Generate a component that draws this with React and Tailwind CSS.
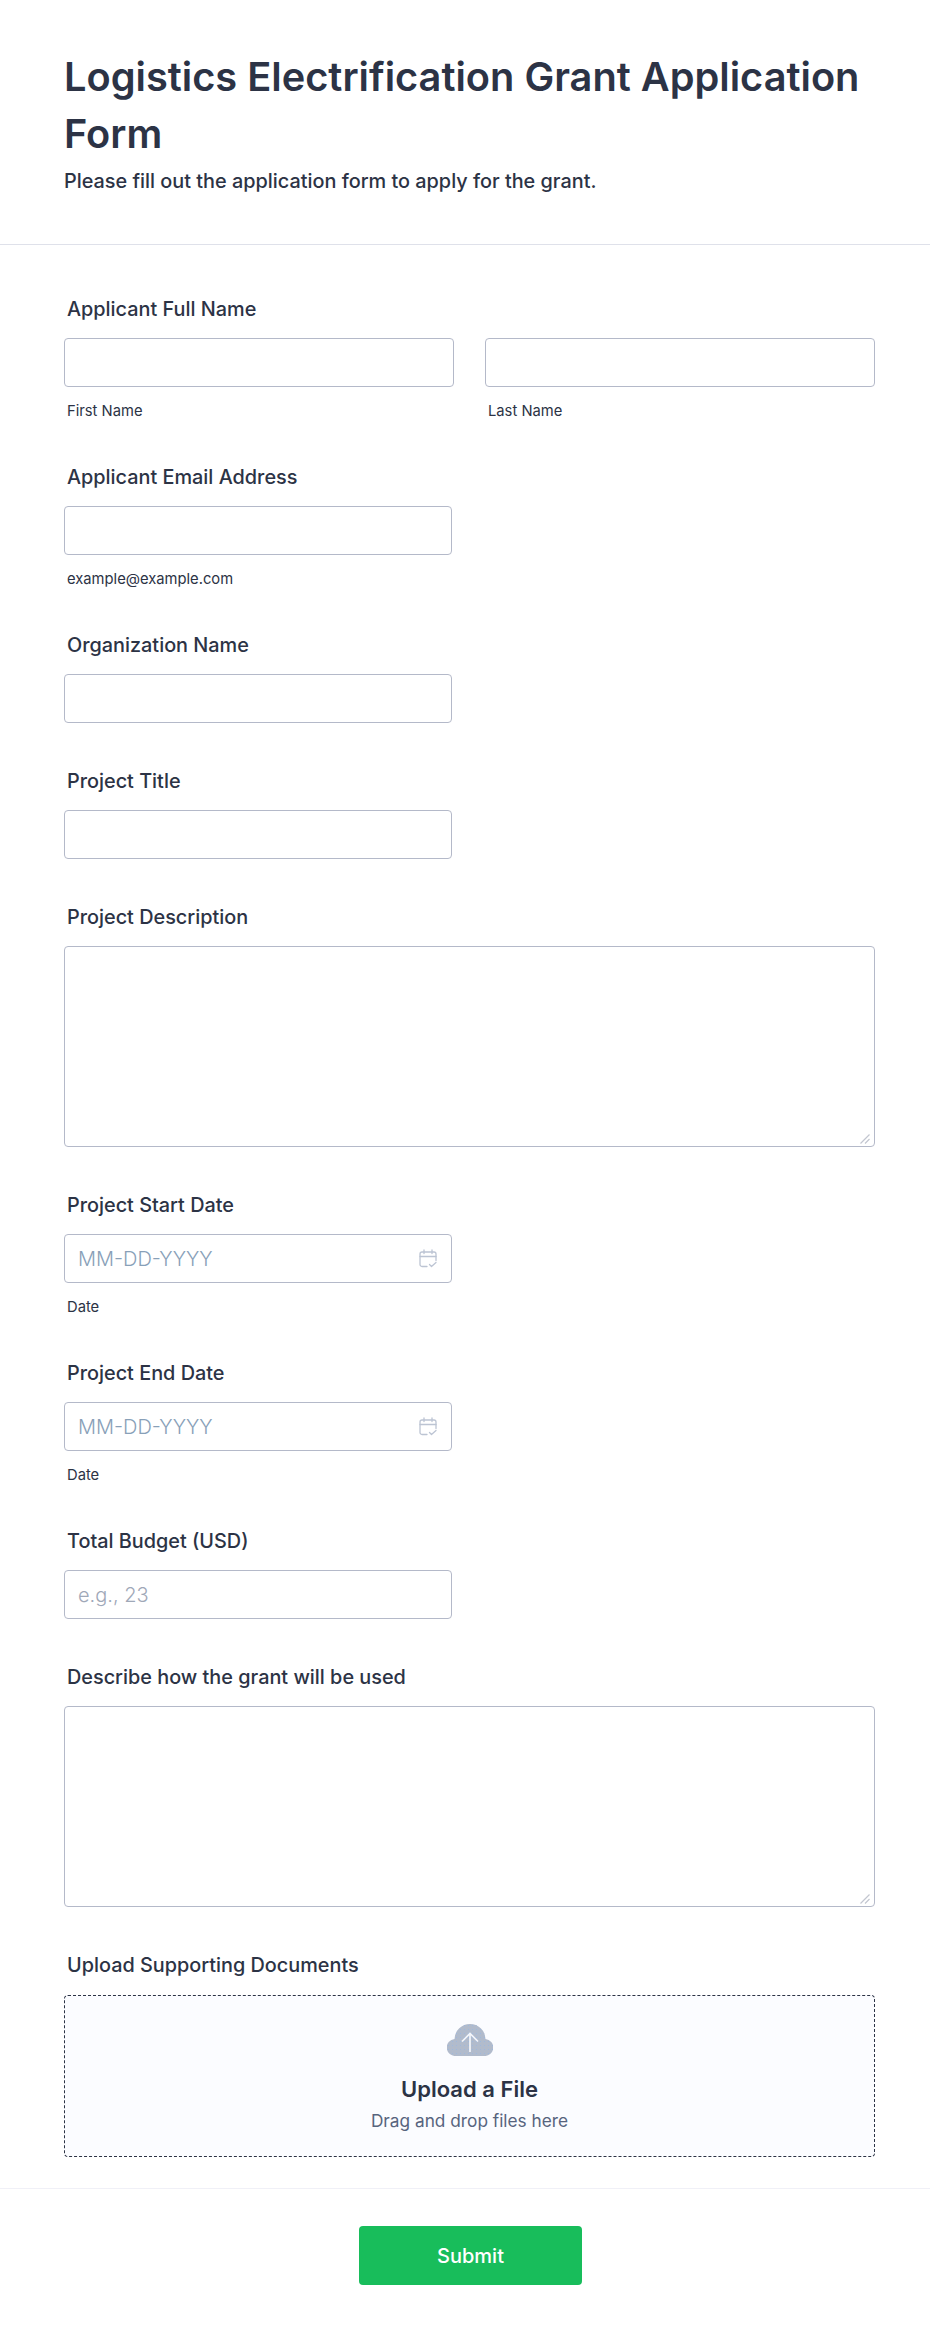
const font = { fontFamily: "Inter, sans-serif" };

function CalendarIcon() {
    return (
        <svg className="absolute right-[15px] top-[15px]" width="18" height="19" viewBox="0 0 18 19" fill="none" stroke="#bcc4d3" strokeWidth="1.3" strokeLinecap="round" strokeLinejoin="round">
            <path d="M8 17.500H3a2 2 0 0 1-2-2V5a2 2 0 0 1 2-2h12a2 2 0 0 1 2 2v6.500" />
            <path d="M1 7.500h16" />
            <path d="M5 1v3.500M13 1v3.500" />
            <path d="M10.500 15.500l2 2 4.500-4" />
        </svg>
    );
}

function CloudIcon() {
    return (
        <svg width="46" height="32" viewBox="0 0 46 32">
            <defs>
                <pattern id="dots" width="4" height="4" patternUnits="userSpaceOnUse">
                    <rect x="1" y="1" width="1" height="1" fill="#9fb8dc" />
                </pattern>
            </defs>
            <path d="M9 32a8.500 8.500 0 0 1-1.500-17A15.500 15.500 0 0 1 23 0a15.500 15.500 0 0 1 15.500 15A8.500 8.500 0 0 1 37 32Z" fill="#b1bbcc" />
            <path d="M9 32a8.500 8.500 0 0 1-1.500-17A15.500 15.500 0 0 1 23 0a15.500 15.500 0 0 1 15.500 15A8.500 8.500 0 0 1 37 32Z" fill="url(#dots)" />
            <path d="M23 28V10M15 17.500L23 9.500l8 8" fill="none" stroke="#f4f6fb" strokeWidth="1.700" />
        </svg>
    );
}

function Label({ children, className = "mb-[17px]" }) {
    return <label className={`block h-6 ml-[3px] text-[19.850px] leading-6 font-[450] text-[#2c3345] ${className}`}>{children}</label>;
}

function Sub({ children }) {
    return <div className="h-4 mt-[16px] ml-[3px] text-[14.750px] leading-4 text-[#2c3345]">{children}</div>;
}

function TextInput({ placeholder, className = "" }) {
    return (
        <input
            type="text"
            placeholder={placeholder}
            className={`w-full h-[49px] px-[13px] bg-white border border-[#b4b9c9] rounded-[4px] text-[20px] text-[#2c3345] outline-none ${className}`}
        />
    );
}

function TextArea() {
    return (
        <div className="relative">
            <textarea className="block w-full h-[201px] bg-white border border-[#b4b9c9] rounded-[4px] outline-none resize-none" />
            <svg className="absolute right-[5px] bottom-[3px]" width="10" height="10" viewBox="0 0 10 10" fill="none" stroke="#c2c6d0" strokeWidth="1.200">
                <path d="M0.500 9.500L9.500 0.500M5 9.500L9.500 5" />
            </svg>
        </div>
    );
}

function DateField({ label }) {
    return (
        <div>
            <Label>{label}</Label>
            <div className="relative w-[388px]">
                <TextInput placeholder="MM-DD-YYYY" className="placeholder:text-[#88a0b8] font-light" />
                <CalendarIcon />
            </div>
            <Sub>Date</Sub>
        </div>
    );
}

export default function App() {
    return (
        <div className="min-h-[2335px] bg-white" style={font}>
            {/* Kopfbereich */}
            <header className="h-[245px] px-16 pt-[48px] border-b border-[#dfe1ea]">
                <h1 className="text-[39.750px] leading-[57px] font-semibold text-[#2c3345]">Logistics Electrification Grant Application Form</h1>
                <p className="mt-[7px] text-[19.850px] leading-6 font-[450] text-[#2c3345]">Please fill out the application form to apply for the grant.</p>
            </header>

            {/* Formularfelder */}
            <form className="flex flex-col gap-[46px] pl-16 pr-[55px] pt-[52px] pb-[31px] border-b border-[#f0f0f7]">
                <div>
                    <Label>Applicant Full Name</Label>
                    <div className="grid grid-cols-2 gap-[31px]">
                        <div>
                            <TextInput />
                            <Sub>First Name</Sub>
                        </div>
                        <div>
                            <TextInput />
                            <Sub>Last Name</Sub>
                        </div>
                    </div>
                </div>

                <div>
                    <Label>Applicant Email Address</Label>
                    <div className="w-[388px]"><TextInput /></div>
                    <Sub>example@example.com</Sub>
                </div>

                <div>
                    <Label>Organization Name</Label>
                    <div className="w-[388px]"><TextInput /></div>
                </div>

                <div>
                    <Label>Project Title</Label>
                    <div className="w-[388px]"><TextInput /></div>
                </div>

                <div>
                    <Label>Project Description</Label>
                    <TextArea />
                </div>

                <DateField label="Project Start Date" />
                <DateField label="Project End Date" />

                <div>
                    <Label>Total Budget (USD)</Label>
                    <div className="w-[388px]"><TextInput placeholder="e.g., 23" className="placeholder:text-[#9fa8b8] font-light" /></div>
                </div>

                <div>
                    <Label>Describe how the grant will be used</Label>
                    <TextArea />
                </div>

                <div>
                    <Label className="mb-[18px]">Upload Supporting Documents</Label>
                    <div className="flex flex-col items-center h-[162px] pt-[28px] bg-[#fbfcff] border border-dashed border-[#2c3345] rounded-[4px]">
                        <CloudIcon />
                        <div className="mt-[19px] text-[22px] leading-7 font-semibold text-[#2c3345]">Upload a File</div>
                        <div className="mt-[6px] text-[17.250px] leading-6 text-[#57647e]">Drag and drop files here</div>
                    </div>
                </div>
            </form>

            {/* Absenden */}
            <div className="flex justify-center pl-[11px] pt-[37px] pb-[46px]">
                <button type="button" className="w-[223px] h-[59px] bg-[#18bd5b] rounded-[4px] text-[20px] font-medium text-white">Submit</button>
            </div>
        </div>
    );
}
